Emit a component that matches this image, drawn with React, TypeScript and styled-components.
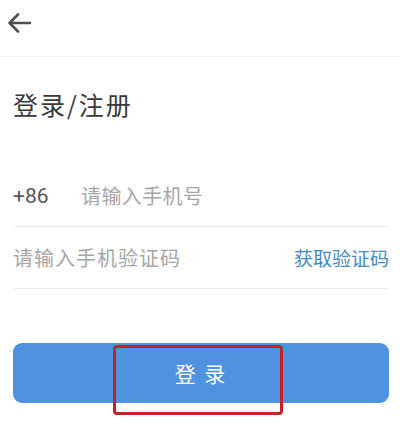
import styled, { createGlobalStyle } from "styled-components";

const GlobalStyle = createGlobalStyle`
    body{
        margin: 0;
        background: #fff;
        font-family: "Noto Sans CJK SC", "Noto Sans", sans-serif;
    }
`;

export default function App(){
    return(
        <Page>
            <GlobalStyle />
            <Header>
                <BackButton aria-label="back">
                    <svg width="26" height="24" viewBox="0 0 26 24" fill="none">
                        <path d="M24 12H3.5M12 3.5L3.5 12L12 20.5" stroke="#4f4f4f" strokeWidth="2.6" strokeLinecap="round" strokeLinejoin="round" />
                    </svg>
                </BackButton>
            </Header>

            <Body>
                <Title>登录/注册</Title>

                <Form>
                    <Row>
                        <Prefix>+86</Prefix>
                        <Field placeholder="请输入手机号" />
                    </Row>
                    <Row>
                        <Field placeholder="请输入手机验证码" $spacing={1} />
                        <CodeLink>获取验证码</CodeLink>
                    </Row>
                </Form>

                <ButtonWrap>
                    <LoginButton>登 录</LoginButton>
                    <Highlight />
                </ButtonWrap>
            </Body>
        </Page>
    );
}

const Page = styled.div`
    width: 400px;
    min-height: 447px;
    background: #fff;
`;

const Header = styled.div`
    height: 57px;
    box-sizing: border-box;
    padding: 11px 0 0 6px;
    border-bottom: 1px solid #efefef;
`;

const BackButton = styled.button`
    border: 0;
    background: none;
    padding: 0;
    display: flex;
    cursor: pointer;
`;

const Body = styled.div`
    padding: 0 11px 0 13px;
`;

const Title = styled.h1`
    margin: 34px 0 0;
    font-size: 25px;
    line-height: 26px;
    font-weight: 400;
    letter-spacing: 2px;
    color: #3a3a3a;
`;

const Form = styled.div`
    margin-top: 48px;
`;

const Row = styled.div`
    display: flex;
    align-items: center;
    height: 61px;
    border-bottom: 1px solid #ececec;
`;

const Prefix = styled.span`
    width: 68px;
    flex-shrink: 0;
    font-family: Roboto, "Liberation Sans", sans-serif;
    font-size: 21px;
    color: #555;
`;

const Field = styled.input<{ $spacing?: number }>`
    flex: 1;
    min-width: 0;
    border: 0;
    outline: none;
    padding: 0;
    background: transparent;
    font-family: "Noto Sans CJK SC", sans-serif;
    font-size: 20px;
    letter-spacing: ${p => p.$spacing ?? 0.4}px;
    color: #333;
    &::placeholder{
        color: #a6a6a6;
    }
`;

const CodeLink = styled.span`
    flex-shrink: 0;
    font-size: 19px;
    color: #4289c6;
    cursor: pointer;
`;

const ButtonWrap = styled.div`
    position: relative;
    margin-top: 54px;
`;

const LoginButton = styled.button`
    display: block;
    width: 100%;
    height: 60px;
    border: 0;
    border-radius: 9px;
    background: #4f93e0;
    color: #fff;
    font-family: "Noto Sans CJK SC", sans-serif;
    font-size: 21px;
    letter-spacing: 2px;
`;

const Highlight = styled.div`
    position: absolute;
    left: 100px;
    top: 2px;
    width: 170px;
    height: 70px;
    box-sizing: border-box;
    border: 3.5px solid #c6202b;
    border-radius: 4px;
    pointer-events: none;
`;
